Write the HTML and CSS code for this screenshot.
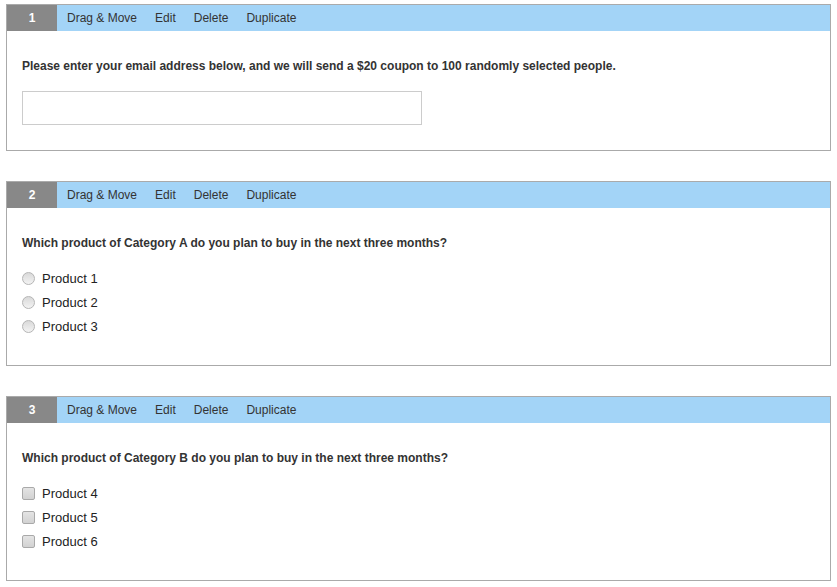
FILE: index.html
```html
<!DOCTYPE html>
<html>
<head>
<meta charset="utf-8">
<link rel="stylesheet" href="styles.css">
</head>
<body>
<div class="page">
  <div class="card">
    <div class="bar">
      <div class="num">1</div>
      <div class="menu"><span>Drag &amp; Move</span><span>Edit</span><span>Delete</span><span>Duplicate</span></div>
    </div>
    <div class="body">
      <div class="q q-input">Please enter your email address below, and we will send a $20 coupon to 100 randomly selected people.</div>
      <input class="text" type="text">
    </div>
  </div>
  <div class="card">
    <div class="bar">
      <div class="num">2</div>
      <div class="menu"><span>Drag &amp; Move</span><span>Edit</span><span>Delete</span><span>Duplicate</span></div>
    </div>
    <div class="body body-list">
      <div class="q">Which product of Category A do you plan to buy in the next three months?</div>
      <label class="opt"><span class="radio"></span>Product 1</label>
      <label class="opt"><span class="radio"></span>Product 2</label>
      <label class="opt"><span class="radio"></span>Product 3</label>
    </div>
  </div>
  <div class="card">
    <div class="bar">
      <div class="num">3</div>
      <div class="menu"><span>Drag &amp; Move</span><span>Edit</span><span>Delete</span><span>Duplicate</span></div>
    </div>
    <div class="body body-list">
      <div class="q">Which product of Category B do you plan to buy in the next three months?</div>
      <label class="opt"><span class="check"></span>Product 4</label>
      <label class="opt"><span class="check"></span>Product 5</label>
      <label class="opt"><span class="check"></span>Product 6</label>
    </div>
  </div>
</div>
</body>
</html>
```

FILE: styles.css
```css
html, body {
  margin: 0;
  padding: 0;
  background: #fff;
}
body {
  font-family: "Liberation Sans", Arial, sans-serif;
  color: #333;
}
.page {
  padding: 4px 6px;
}
.card {
  border: 1px solid #aaa;
  margin-bottom: 30px;
  background: #fff;
}
.bar {
  display: flex;
  height: 26px;
  background: #a3d4f7;
}
.num {
  width: 50px;
  background: #888;
  color: #fff;
  font-weight: bold;
  font-size: 12px;
  display: flex;
  align-items: center;
  justify-content: center;
}
.menu {
  display: flex;
  align-items: center;
  padding-left: 1px;
  font-size: 12px;
  color: #333;
}
.menu span {
  padding: 0 9px;
}
.body {
  padding: 26px 15px 25px;
}
.body-list {
  padding-bottom: 27px;
}
.q {
  font-size: 12px;
  font-weight: bold;
  line-height: 18px;
  color: #333;
  margin-bottom: 14px;
}
.q-input {
  margin-bottom: 16px;
}
.text {
  display: block;
  box-sizing: border-box;
  width: 400px;
  height: 34px;
  margin: 0;
  border: 1px solid #ccc;
  background: #fff;
}
.opt {
  display: flex;
  align-items: center;
  height: 24px;
  font-size: 13px;
  color: #222;
}
.radio, .check {
  box-sizing: border-box;
  width: 13px;
  height: 13px;
  margin-right: 7px;
  border: 1px solid #b5b5b5;
  background: linear-gradient(#d9d9d9, #f3f3f3);
}
.radio {
  border-radius: 50%;
}
.check {
  border-radius: 2px;
  background: linear-gradient(#e4e4e4, #d2d2d2);
  border-color: #a9a9a9;
}
```
